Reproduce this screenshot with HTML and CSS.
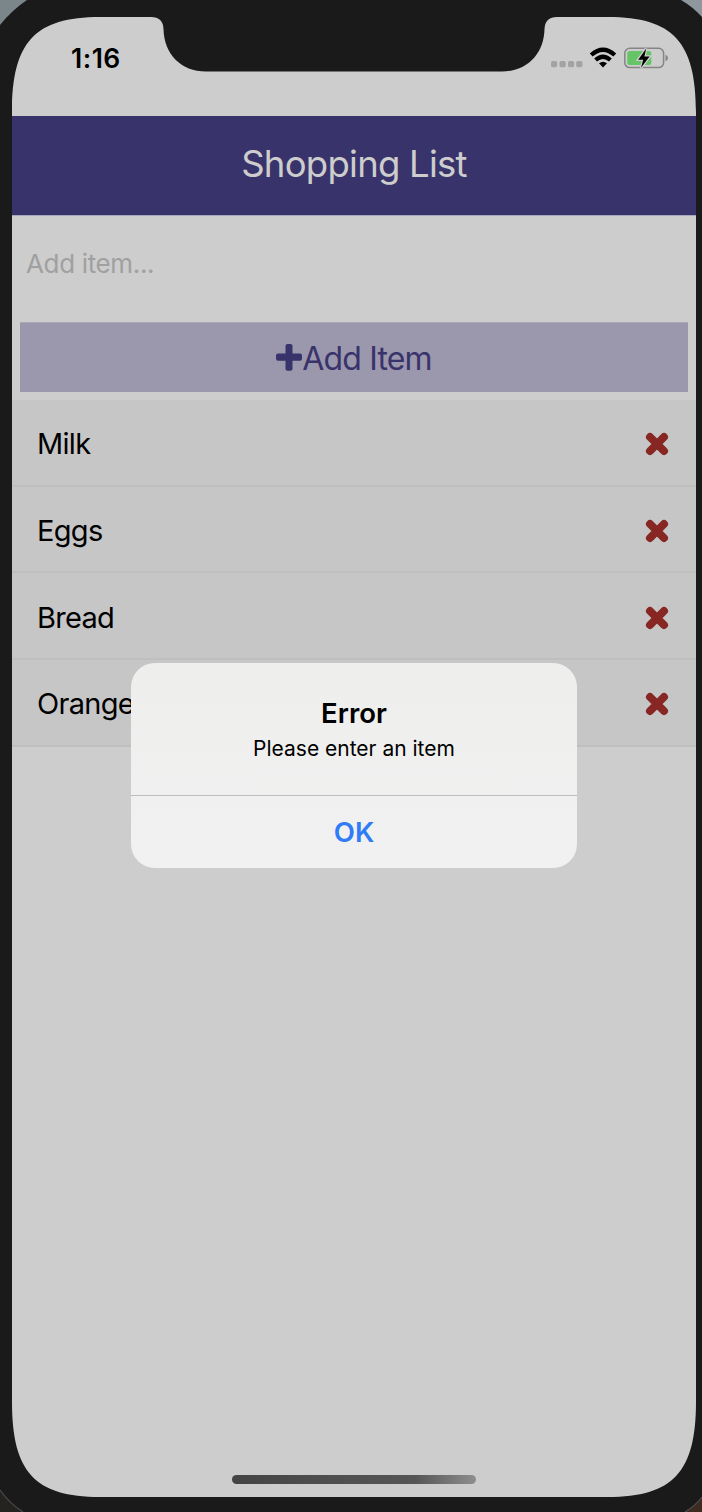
FILE: index.html
```html
<!DOCTYPE html>
<html lang="en">
<head>
<meta charset="utf-8">
<title>Shopping List</title>
<link rel="stylesheet" href="styles.css">
</head>
<body>
<div class="device">
  <main class="screen">
    <div class="status">
      <span class="time">1:16</span>
      <svg class="signals" width="120" height="24" viewBox="549 46 120 24">
        <g fill="#a3a3a3"><rect x="551" y="61" width="6.2" height="6.2" rx="1.6"/><rect x="559.5" y="61" width="6.2" height="6.2" rx="1.6"/><rect x="568" y="61" width="6.2" height="6.2" rx="1.6"/><rect x="576.2" y="61" width="6.2" height="6.2" rx="1.6"/></g>
        <g fill="none" stroke="#000" stroke-width="4.2"><path d="M591.2 55Q603 44.400 614.8 55"/><path d="M595.6 60Q603 53.400 610.4 60"/></g>
        <path d="M599 63.300Q603 60 607 63.300L603 67.400Z"/>
        <rect x="624.8" y="48.2" width="38.8" height="19.4" rx="5" fill="none" stroke="#858585" stroke-width="1.5"/>
        <path d="M665.5 54.8Q668 55.5 668 58Q668 60.5 665.5 61.2Z" fill="#858585"/>
        <rect x="627.3" y="50.9" width="24" height="14.2" rx="2.5" fill="#65c466"/>
        <path d="M646.2 48.5L638.2 59.8H643.2L641 67.8L649.6 56.6H644.4Z" stroke="#cdcdcd" stroke-width="2.6"/>
        <path d="M646.2 48.5L638.2 59.8H643.2L641 67.8L649.6 56.6H644.4Z"/>
      </svg>
    </div>
    <header class="header"><h1 class="title">Shopping List</h1></header>
    <div class="entry"><span class="placeholder">Add item...</span></div>
    <div class="add">
      <svg width="26" height="27" viewBox="0 0 26 27"><path d="M11.5 0h3a2 2 0 0 1 2 2v7.5H24a2 2 0 0 1 2 2v3.3a2 2 0 0 1-2 2h-7.5v8a2 2 0 0 1-2 2h-3a2 2 0 0 1-2-2v-8H2a2 2 0 0 1-2-2v-3.3a2 2 0 0 1 2-2h7.500V2a2 2 0 0 1 2-2Z" fill="#39336b"/></svg><span class="add-label">Add Item</span>
    </div>
    <ul class="list">
      <li class="item"><span>Milk</span><svg class="remove" viewBox="0 0 22 22"><path d="M4 4L18 18M18 4L4 18"/></svg></li>
      <li class="item"><span>Eggs</span><svg class="remove" viewBox="0 0 22 22"><path d="M4 4L18 18M18 4L4 18"/></svg></li>
      <li class="item"><span>Bread</span><svg class="remove" viewBox="0 0 22 22"><path d="M4 4L18 18M18 4L4 18"/></svg></li>
      <li class="item"><span>Orange</span><svg class="remove" viewBox="0 0 22 22"><path d="M4 4L18 18M18 4L4 18"/></svg></li>
    </ul>
    <div class="home"></div>
  </main>
  <svg class="bezel" viewBox="0 0 702 1512">
    <path fill="#1a1a1a" fill-rule="evenodd" d="M0 0H702V1512H0Z M12 112C12 42 35 17 100 17H151Q163 17 163.500 29C164 54 181 71.500 206 71.500H502C527 71.500 544 54 544.500 29Q545 17 557 17H608C673 17 696 42 696 112V1402C696 1472 673 1497 608 1497H100C35 1497 12 1472 12 1402Z"/>
    <path fill="#7b868b" d="M0 0H27Q12 10 0 25Z"/>
    <path fill="#8e979d" d="M681 0H702V17Q693 7 681 0Z"/>
    <path fill="#252320" d="M0 1490Q9 1503 23 1512H0Z"/>
    <path fill="#3d2b22" d="M702 1497Q695 1506 685 1512H702Z"/>
    <path fill="none" stroke="#4c4c4c" stroke-width="1.200" d="M0 1490Q9 1503 23 1512M702 1497Q695 1506 685 1512"/>
  </svg>
  <section class="alert" role="alertdialog">
    <div class="message">
      <h2 class="alert-title">Error</h2>
      <p class="alert-text">Please enter an item</p>
    </div>
    <div class="ok">OK</div>
  </section>
</div>
</body>
</html>
```
FILE: styles.css
```css
* { box-sizing: border-box; }
body { margin: 0; font-family: Inter, "Liberation Sans", sans-serif; background: #1a1a1a; }
h1, h2, p, ul { margin: 0; padding: 0; font-weight: 400; }
svg { display: block; flex: none; }
span { white-space: nowrap; }
.device { position: relative; width: 702px; height: 1512px; padding: 17px 6px 15px 12px; overflow: hidden; }
.screen { display: flex; flex-direction: column; height: 1480px; background: #cdcdcd; }
.status { display: flex; justify-content: space-between; align-items: flex-start; height: 99px; padding: 29px 27px 0 59px; }
.time { font-size: 26.500px; line-height: 25px; font-weight: 600; letter-spacing: 0.5px; }
.header { display: flex; justify-content: center; height: 100px; background: #39336b; border-bottom: 1px solid #aaa6bc; }
.title { font-size: 36.500px; line-height: 97px; color: #cdcdcd; letter-spacing: -0.75px; }
.entry { height: 106px; padding: 0 14px; font-size: 26px; line-height: 96px; color: #a0a0a0; letter-spacing: -0.35px; }
.add { display: flex; justify-content: center; align-items: center; height: 70px; margin: 0 8px 8px; background: #9b97ad; border-top: 1px solid #aaa7b8; color: #39336b; }
.add svg { margin-top: -1px; }
.add-label { font-size: 32px; line-height: 68px; padding-top: 2px; letter-spacing: -0.85px; }
.list { list-style: none; }
.item { display: flex; align-items: center; justify-content: space-between; height: 86.700px; padding: 0 28px 0 25px; background: #c6c6c6; border-bottom: 2px solid #bfbfbf; font-size: 29px; line-height: 40px; letter-spacing: -0.7px; }
.item span { padding-top: 4px; }
.remove { width: 22px; height: 22px; margin-top: 4px; overflow: visible; }
.remove path { fill: none; stroke: #872622; stroke-width: 8; stroke-linecap: round; }
.home { width: 244px; height: 9px; margin: auto auto 13px; border-radius: 5px; background: linear-gradient(90deg, #444 0%, #505050 45%, #555 75%, #8e8e8e 100%); }
.bezel { position: absolute; inset: 0; width: 702px; height: 1512px; }
.alert { position: absolute; left: 131px; top: 663px; width: 446px; height: 205px; border-radius: 24px; background: linear-gradient(#eeeeed, #f1f1f1); overflow: hidden; text-align: center; }
.message { height: 133px; padding-top: 34px; border-bottom: 1px solid #bcbcbd; }
.alert-title { font-size: 27.500px; line-height: 32px; font-weight: 600; }
.alert-text { font-size: 21px; line-height: 39px; }
.ok { font-size: 27.500px; line-height: 73px; font-weight: 600; color: #2f7cf6; }
```
